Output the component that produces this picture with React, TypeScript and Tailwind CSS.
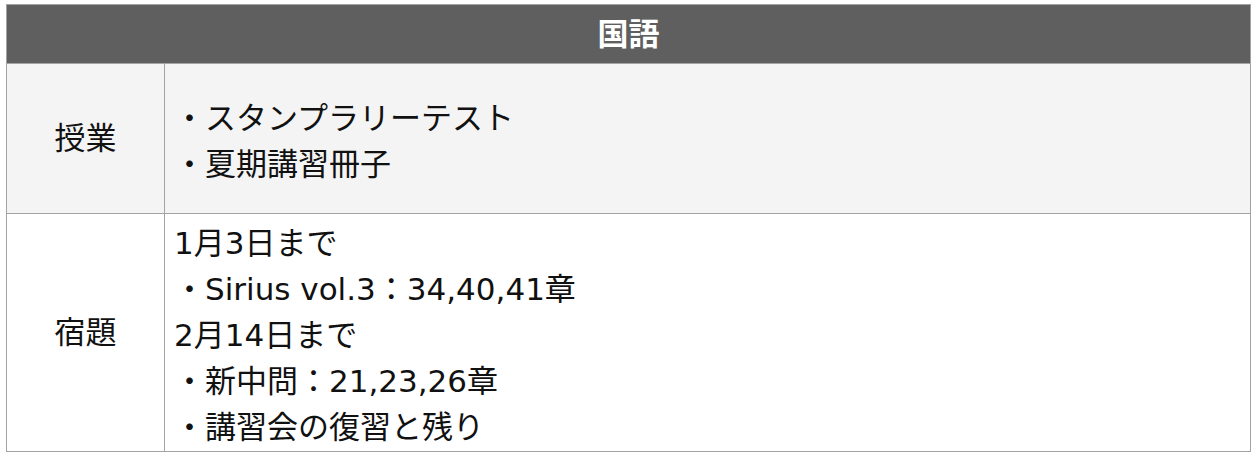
const font = { fontFamily: '"DejaVu Sans", "Noto Sans CJK JP", sans-serif' };

const homework = [
  '1月3日まで',
  '・Sirius vol.3：34,40,41章',
  '2月14日まで',
  '・新中問：21,23,26章',
  '・講習会の復習と残り',
];

export default function App() {
  return (
    <div className="min-h-[458px] bg-white pl-[6px] pt-[4px]" style={font}>
      <table className="w-[1245px] border-collapse text-[31px] text-[#111]">
        <thead>
          <tr className="h-[59px]">
            <th
              colSpan={2}
              className="border border-[#a3a3a3] bg-[#5f5f5f] text-center text-[31px] font-bold text-white"
            >
              国語
            </th>
          </tr>
        </thead>
        <tbody>
          <tr className="h-[150px] bg-[#f4f4f4]">
            <td className="w-[158px] border border-[#a3a3a3] text-center align-middle">授業</td>
            <td className="border border-[#a3a3a3] px-[9px] pt-[4px] align-middle leading-[46px]">
              <div>・スタンプラリーテスト</div>
              <div>・夏期講習冊子</div>
            </td>
          </tr>
          <tr className="h-[238px] bg-white">
            <td className="w-[158px] border border-[#a3a3a3] text-center align-middle">宿題</td>
            <td className="border border-[#a3a3a3] px-[9px] pt-[4px] align-middle leading-[46px]">
              {homework.map((line) => (
                <div key={line}>{line}</div>
              ))}
            </td>
          </tr>
        </tbody>
      </table>
    </div>
  );
}
